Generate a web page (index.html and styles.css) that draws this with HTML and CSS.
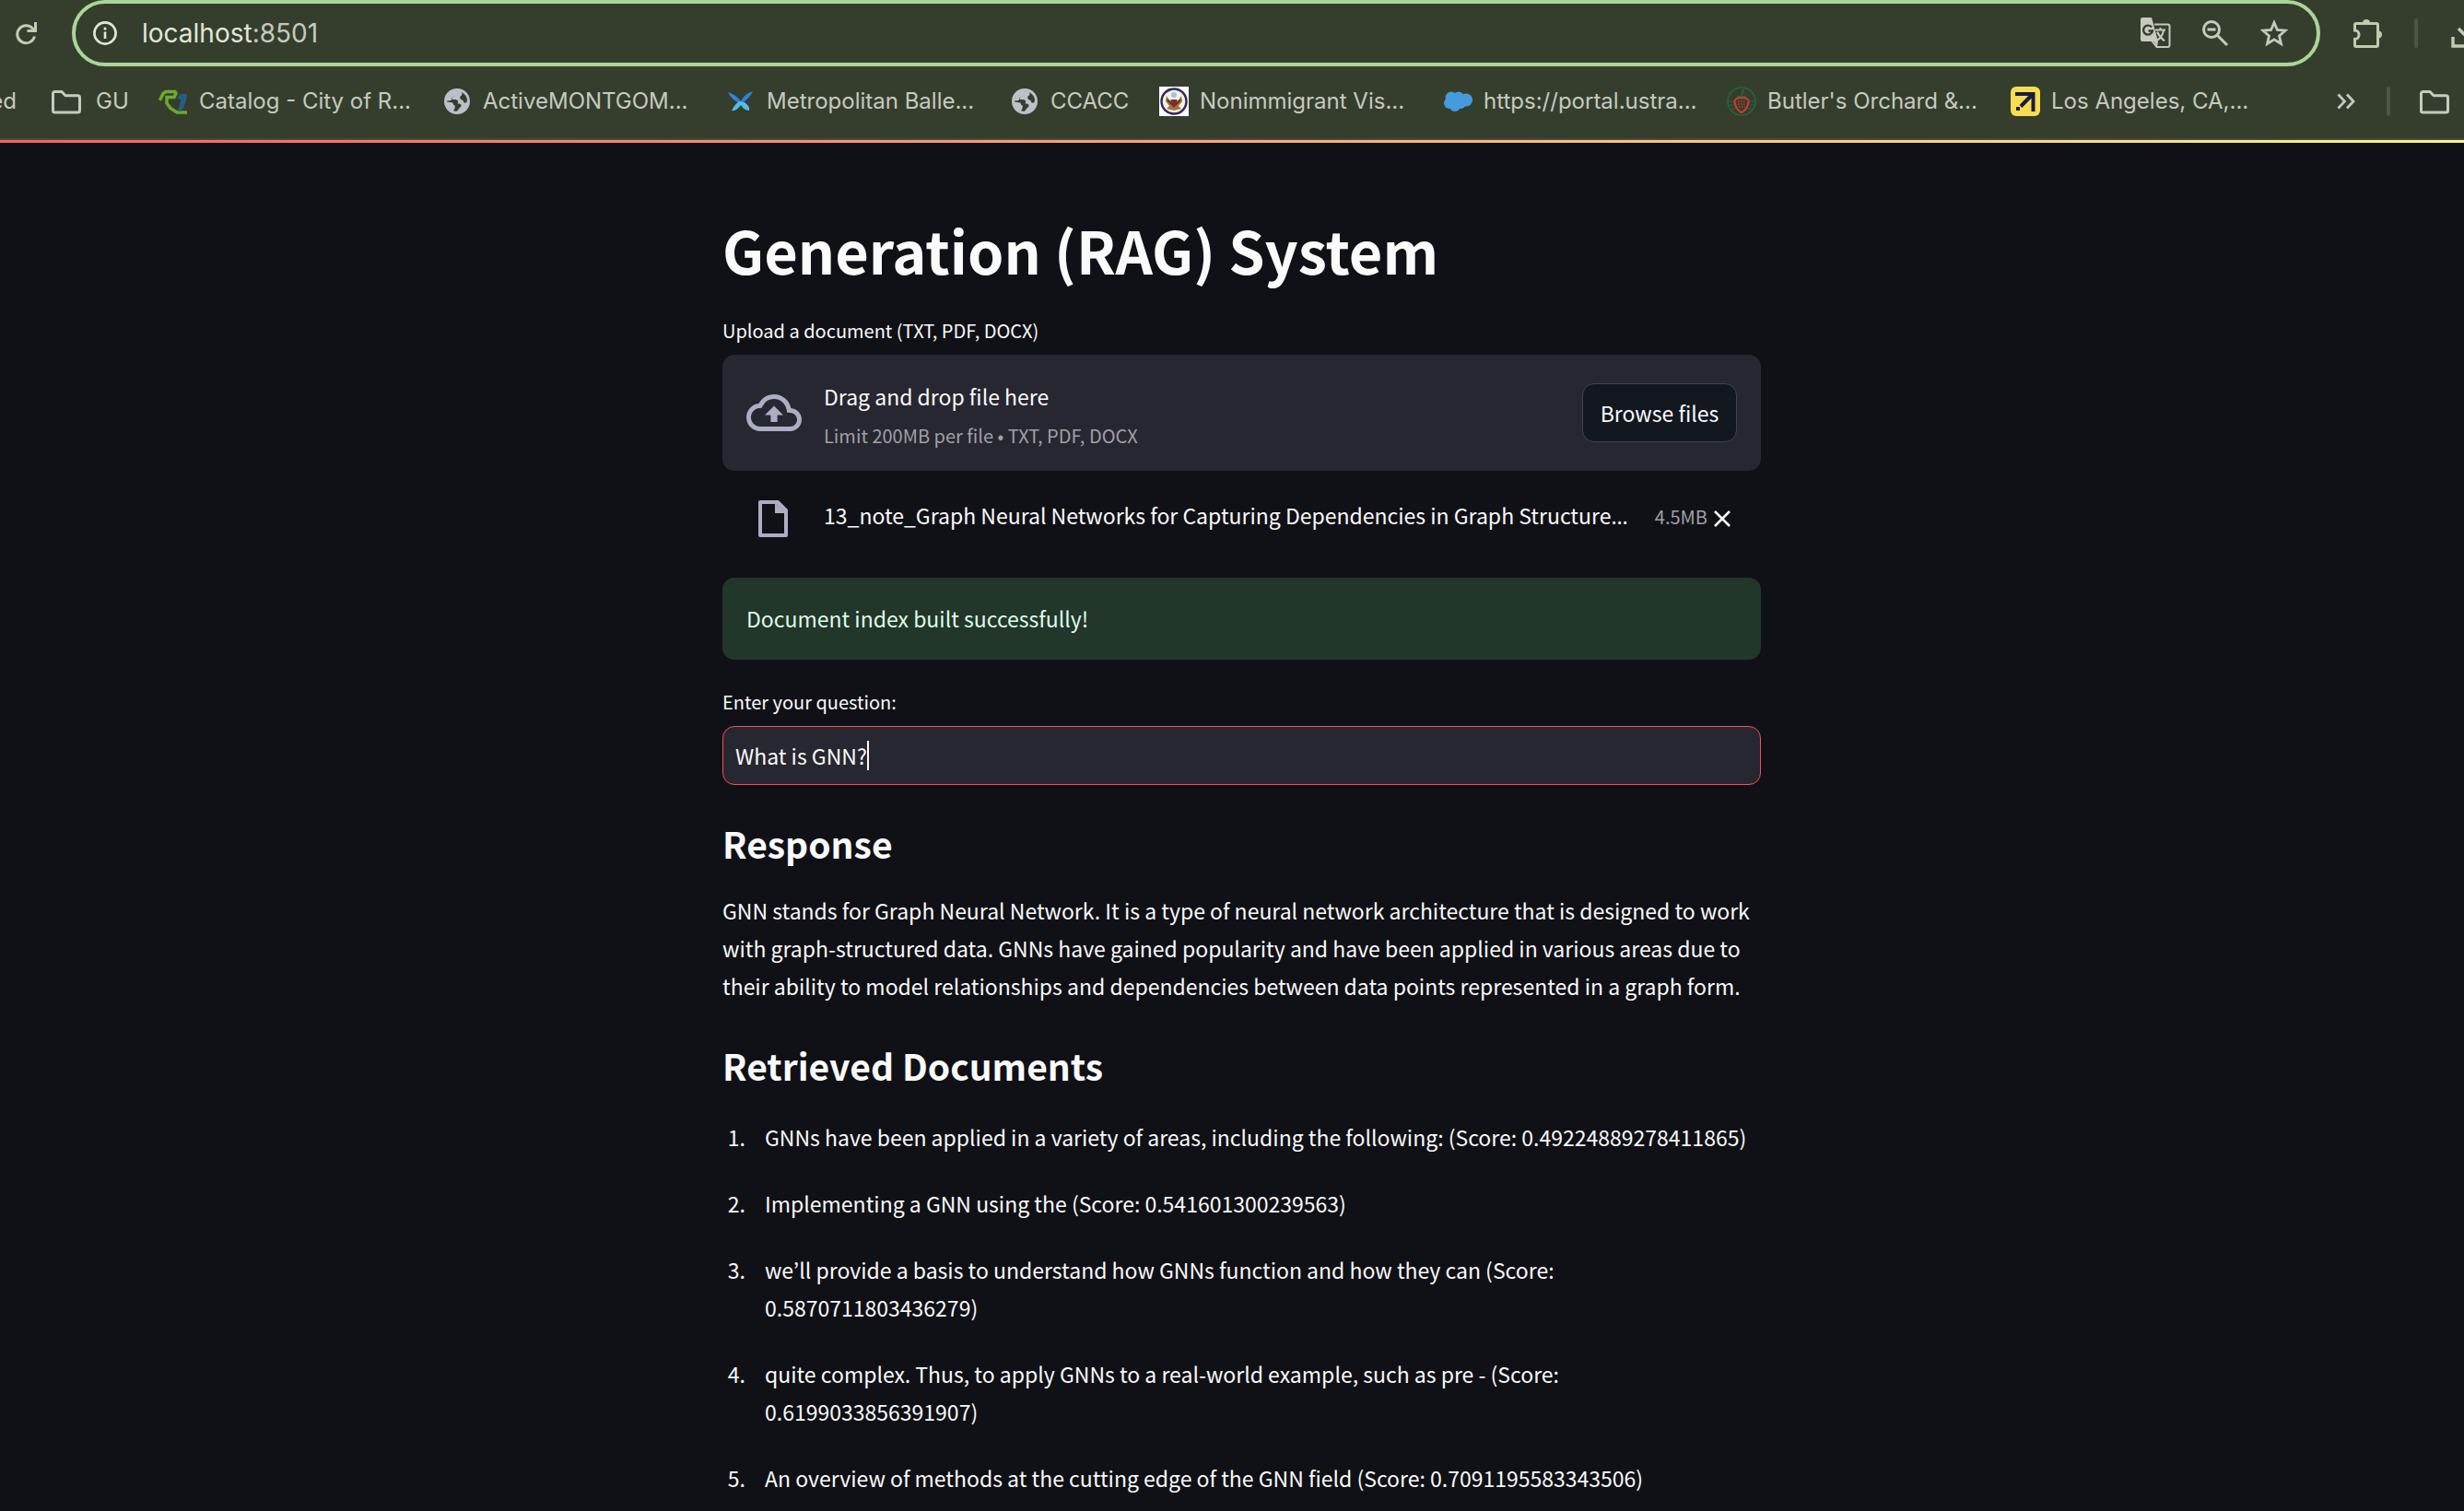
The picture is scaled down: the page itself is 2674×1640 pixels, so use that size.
FILE: index.html
```html
<!DOCTYPE html>
<html lang="en">
<head>
<meta charset="utf-8">
<title>Generation (RAG) System</title>
<link rel="stylesheet" href="styles.css">
</head>
<body>
<header class="browser">
  <div class="toolbar">
    <button class="icon-button reload" aria-label="Reload"><svg width="24" height="26" viewBox="0 0 24 26" fill="none" stroke="#bfccb0" stroke-width="3"><path d="M21.500 16.500A9.500 9.500 0 1 1 19 7.500L21 9.500"/><path d="M22.500 1V10.500H13.500"/></svg></button>
    <form class="omnibox">
      <svg class="info" width="26" height="26" viewBox="0 0 26 26" fill="none" stroke="#e2e6da" stroke-width="2.600"><circle cx="13" cy="13" r="11.600"/><path d="M13 11.500v7.500M13 6.800v2.600"/></svg>
      <div class="address"><span class="host">localhost</span>:8501</div>
      <button type="button" class="icon-button" aria-label="Translate"><svg width="34" height="34" viewBox="0 0 34 34"><path d="M16 7.500H30.500a2 2 0 0 1 2 2V30a2 2 0 0 1-2 2H18.500L13 25" fill="none" stroke="#c5cabf" stroke-width="2"/><path d="M3 0H13L20 26L19 32L15.500 26H3a2 2 0 0 1-2-2V2a2 2 0 0 1 2-2Z" fill="#c5cabf"/><path d="M13 10.500A5 5 0 1 0 14 14.500H9.500" fill="none" stroke="#353e2d" stroke-width="2.400"/><path d="M17 13.500H28M22.500 11v2.500M26 14C25 19 22 23 18.500 25M19 15.500C20.500 19 24 23 27 25.500" fill="none" stroke="#c5cabf" stroke-width="2"/></svg></button>
      <button type="button" class="icon-button" aria-label="Zoom"><svg width="30" height="30" viewBox="0 0 30 30" fill="none" stroke="#c5cabf" stroke-width="3"><circle cx="11" cy="11" r="8.500"/><path d="M17.500 17.500L28 28M6.500 11H15.500"/></svg></button>
      <button type="button" class="icon-button" aria-label="Bookmark"><svg width="32" height="32" viewBox="0 0 32 32" fill="none" stroke="#c5cabf" stroke-width="2.800"><path d="M16 4.500L19.400 12.500L28 13.200L21.500 18.900L23.500 27.500L16 22.900L8.500 27.500L10.500 18.900L4 13.200L12.600 12.500Z"/></svg></button>
    </form>
    <button class="icon-button puzzle" aria-label="Extensions"><svg width="34" height="34" viewBox="0 0 34 34"><path d="M5 6.500H27a1.500 1.500 0 0 1 1.500 1.500V30a1.500 1.500 0 0 1-1.500 1.500H5A1.500 1.500 0 0 1 3.500 30V23.500C6 23.500 8 21.500 8 18.700S6 14 3.500 14V8A1.500 1.500 0 0 1 5 6.500Z" fill="none" stroke="#bfccb0" stroke-width="3"/><path d="M12 6a4 4 0 0 1 8 0ZM29 14.500a4 4 0 0 1 0 8Z" fill="#bfccb0"/></svg></button>
    <span class="divider"></span>
    <button class="icon-button download" aria-label="Downloads"><svg width="32" height="32" viewBox="0 0 32 32" fill="none" stroke="#bfccb0" stroke-width="3.400"><path d="M2 20V30H30V20M16 2V22M8 11L16 19L24 11"/></svg></button>
  </div>
  <nav class="bookmarks">
    <a class="clipped" href="#">ed</a>
    <a class="bookmark folder" href="#"><svg width="32" height="32" viewBox="0 0 32 32" fill="none" stroke="#c5cabf" stroke-width="3" stroke-linejoin="round"><path d="M1.500 7.500a2 2 0 0 1 2-2H11L15 9.800H28.500a2 2 0 0 1 2 2V26a2 2 0 0 1-2 2H3.500a2 2 0 0 1-2-2Z"/></svg>GU</a>
    <a class="bookmark wide" href="#"><svg width="32" height="32" viewBox="0 0 32 32" fill="none"><path d="M1.500 15L5 7.500L8 5.500H18L19 7.500L17 11.500H9V18L13 23.500L20 28H31" stroke="#6fa92f" stroke-width="3.500"/><path d="M20 13L24 8L31 8L30 15L27 23L24 27L21 26L23 20L24 14Z" fill="#245d86"/></svg>Catalog - City of R...</a>
    <a class="bookmark wide" href="#"><svg width="32" height="32" viewBox="0 0 32 32"><circle cx="16" cy="16" r="14" fill="#bcc0c8"/><path d="M17.500 5C13 6 17 8 15 9.500C12 11 10 12 10.500 14H14C17 14.500 18 16 16.500 18.500C20 18 21.500 20 20 22C18 23 18 25 16 26.500C14.500 27 13 26.500 12 26C14 24 14 22 13.500 20.500C12 20 11.500 18.500 11.500 17.500L5 16.500C5 10 10 5 17.500 5Z" fill="#353e2d"/><path d="M16.500 4.500V9L10.500 12L9.500 15L5 15.500C4 9 10 4 16.500 4.500Z" fill="#bcc0c8"/><path d="M21 6C26 9 28 13 26.500 17C24.500 18.500 23 17.500 22.500 15C20 14.500 18.500 12.500 19.500 10.500C21.500 10 22 8 21 6Z" fill="#353e2d"/></svg>ActiveMONTGOM...</a>
    <a class="bookmark wide" href="#"><svg width="32" height="32" viewBox="0 0 32 32"><path d="M2 6C9 8 14 13 16 16C18 12 22 7 29 5C26 11 22 15 18 17L14 18C8 15 4 11 2 6Z" fill="#347fe2"/><path d="M14 16L20 17C24 20 26 23 25 26C21 26 18 23 16 20C14 23 10 27 6 26C8 22 10 19 14 16Z" fill="#56bde8"/></svg>Metropolitan Balle...</a>
    <a class="bookmark short" href="#"><svg width="32" height="32" viewBox="0 0 32 32"><circle cx="16" cy="16" r="14" fill="#bcc0c8"/><path d="M17.500 5C13 6 17 8 15 9.500C12 11 10 12 10.500 14H14C17 14.500 18 16 16.500 18.500C20 18 21.500 20 20 22C18 23 18 25 16 26.500C14.500 27 13 26.500 12 26C14 24 14 22 13.500 20.500C12 20 11.500 18.500 11.500 17.500L5 16.500C5 10 10 5 17.500 5Z" fill="#353e2d"/><path d="M16.500 4.500V9L10.500 12L9.500 15L5 15.500C4 9 10 4 16.500 4.500Z" fill="#bcc0c8"/><path d="M21 6C26 9 28 13 26.500 17C24.500 18.500 23 17.500 22.500 15C20 14.500 18.500 12.500 19.500 10.500C21.500 10 22 8 21 6Z" fill="#353e2d"/></svg>CCACC</a>
    <a class="bookmark wide" href="#"><svg width="32" height="32" viewBox="0 0 32 32"><path d="M0 0H32V32H0Z" fill="#fff"/><circle cx="16" cy="16" r="13.500" fill="#f4f1e6" stroke="#33295f" stroke-width="2.500"/><path d="M8 10L11 15L14 14H18L21 15L24 10L25 16L21 21L24 24L16 26L8 24L11 21L7 16Z" fill="#9a7a3d"/><path d="M9 14L13 19M23 14L19 19" stroke="#4c3524" stroke-width="2"/><path d="M13 14H19V20L16 23L13 20Z" fill="#8c2436"/><circle cx="16" cy="9" r="3" fill="#9cc4e4"/></svg>Nonimmigrant Vis...</a>
    <a class="bookmark wide" href="#"><svg width="32" height="32" viewBox="0 0 32 32" fill="#459bdc"><circle cx="9" cy="12" r="6.500"/><circle cx="17" cy="11" r="5.500"/><circle cx="25" cy="14.500" r="7"/><circle cx="7" cy="18" r="6"/><circle cx="13" cy="21" r="6"/><circle cx="19" cy="18" r="6"/></svg>https://portal.ustra...</a>
    <a class="bookmark wide" href="#"><svg width="32" height="32" viewBox="0 0 32 32" fill="none"><circle cx="16" cy="16" r="15" stroke="#27643a" stroke-width="1.500"/><path d="M2 16H8M24 16H30M3 20H9M23 20H29M5 24H11M21 24H27" stroke="#27643a"/><path d="M16 10L18 3M11 11H21" stroke="#27643a" stroke-width="2"/><path d="M16 12.500C21 11.500 25 14 23 19C22 24 18 27.500 16 28C14 27.500 10 24 9 19C7 14 11 11.500 16 12.500Z" stroke="#cf3a34" stroke-width="2"/><path d="M12 16H21M12 19H21M13 22H20" stroke="#cf3a34" stroke-width="1.500" stroke-dasharray="1.500 1.500"/></svg>Butler's Orchard &amp;...</a>
    <a class="bookmark wide" href="#"><svg width="32" height="32" viewBox="0 0 32 32"><rect width="32" height="32" rx="6" fill="#f7dc54"/><path d="M5 8H24.500V27M24 8L11 21.500" fill="none" stroke="#191e3b" stroke-width="4"/><path d="M6 22H10V26H6Z" fill="#191e3b"/></svg>Los Angeles, CA,...</a>
    <button class="icon-button more" aria-label="More bookmarks"><svg width="20" height="18" viewBox="0 0 20 18" fill="none" stroke="#c5cabf" stroke-width="2.800"><path d="M1.500 1.500L8.500 9L1.500 16.500M11 1.500L18 9L11 16.500"/></svg></button>
    <span class="divider"></span>
    <a class="bookmark all" href="#" aria-label="All bookmarks"><svg width="32" height="32" viewBox="0 0 32 32" fill="none" stroke="#c5cabf" stroke-width="3" stroke-linejoin="round"><path d="M1.500 7.500a2 2 0 0 1 2-2H11L15 9.800H28.500a2 2 0 0 1 2 2V26a2 2 0 0 1-2 2H3.500a2 2 0 0 1-2-2Z"/></svg></a>
  </nav>
</header>
<div class="decoration"></div>
<main class="app">
  <div class="column">
    <h1>Generation (RAG) System</h1>
    <label class="label" for="browse">Upload a document (TXT, PDF, DOCX)</label>
    <section class="dropzone">
      <svg class="cloud" width="60" height="60" viewBox="0 0 24 24" fill="#acafc3"><path d="M19.350 10.040A7.490 7.490 0 0 0 12 4C9.110 4 6.600 5.640 5.350 8.040A5.994 5.994 0 0 0 0 14c0 3.310 2.690 6 6 6h13c2.760 0 5-2.240 5-5 0-2.640-2.050-4.780-4.650-4.960zM19 18H6c-2.210 0-4-1.790-4-4 0-2.050 1.530-3.760 3.560-3.970l1.070-.110.500-.950A5.469 5.469 0 0 1 12 6c2.620 0 4.880 1.860 5.390 4.430l.300 1.500 1.530.110A2.980 2.980 0 0 1 22 15c0 1.650-1.350 3-3 3zM8 13h2.550v3h2.900v-3H16l-4-4z"/></svg>
      <div class="instructions">
        <span>Drag and drop file here</span>
        <small>Limit 200MB per file • TXT, PDF, DOCX</small>
      </div>
      <button class="browse" id="browse">Browse files</button>
    </section>
    <div class="file">
      <svg class="doc" width="48" height="48" viewBox="0 0 24 24" fill="none" stroke="#acafc3" stroke-width="2"><path d="M5 3H14.500L19 7.500V21H5Z" stroke-linejoin="round"/><path d="M13 3L19.500 9H13Z" fill="#acafc3" stroke="none"/></svg>
      <div class="file-info">
        <span class="file-name">13_note_Graph Neural Networks for Capturing Dependencies in Graph Structure<span class="dots">…</span></span>
        <small>4.5MB</small>
      </div>
      <button class="icon-button remove" aria-label="Remove file"><svg width="18" height="18" viewBox="0 0 18 18" stroke="#fafafa" stroke-width="2.500"><path d="M1 1L17 17M17 1L1 17"/></svg></button>
    </div>
    <div class="success" role="status">Document index built successfully!</div>
    <label class="label" for="question">Enter your question:</label>
    <div class="field"><input id="question" type="text" value="What is GNN?"><span class="caret"></span></div>
    <h2>Response</h2>
    <p>GNN stands for Graph Neural Network. It is a type of neural network architecture that is designed to work with graph-structured data. GNNs have gained popularity and have been applied in various areas due to their ability to model relationships and dependencies between data points represented in a graph form.</p>
    <h2>Retrieved Documents</h2>
    <ol>
      <li>GNNs have been applied in a variety of areas, including the following: (Score: 0.49224889278411865)</li>
      <li>Implementing a GNN using the (Score: 0.541601300239563)</li>
      <li>we’ll provide a basis to understand how GNNs function and how they can (Score: 0.5870711803436279)</li>
      <li>quite complex. Thus, to apply GNNs to a real-world example, such as pre - (Score: 0.6199033856391907)</li>
      <li>An overview of methods at the cutting edge of the GNN field (Score: 0.7091195583343506)</li>
    </ol>
  </div>
</main>
</body>
</html>
```
FILE: styles.css
```css
* { box-sizing: border-box; }
body {
  margin: 0;
  min-height: 100vh;
  background: #101116;
  color: #fafafa;
  font: 23px/41px "Noto Sans CJK KR", "Noto Sans", sans-serif;
  overflow-x: hidden;
}
button { font: inherit; color: inherit; }
svg { display: block; flex: none; }
.icon-button { flex: none; padding: 0; border: 0; background: none; }

.browser {
  background: #353e2d;
  border-bottom: 2px solid #454a42;
  color: #c5cabf;
  font-family: Inter, "Liberation Sans", sans-serif;
  overflow: hidden;
}
.toolbar { display: flex; align-items: center; height: 72px; padding-left: 16px; }
.omnibox {
  flex: 1;
  display: flex;
  align-items: center;
  gap: 33px;
  height: 72px;
  margin-left: 38px;
  padding: 0 30px 0 19px;
  border: 4px solid #abd598;
  border-radius: 36px;
}
.address { flex: 1; margin-left: -6px; font-size: 28px; line-height: 36px; }
.host { color: #e2e6da; }
.puzzle { margin-left: 34px; }
.divider { flex: none; width: 4px; height: 32px; border-radius: 2px; background: #4b5544; }
.toolbar .divider { margin: 0 36px 0 34px; }
.download { margin-right: -18px; }

.bookmarks { display: flex; align-items: center; height: 78px; padding-bottom: 2px; font-size: 24px; line-height: 32px; }
.bookmarks a { color: inherit; text-decoration: none; white-space: nowrap; }
.clipped { flex: none; width: 18px; margin-right: 38px; direction: rtl; }
.bookmark { flex: none; display: flex; align-items: center; gap: 12px; margin-right: 36px; }
.folder { width: 80px; gap: 16px; }
.wide { width: 272px; }
.short { width: 126px; }
.more { margin-left: auto; }
.bookmarks .divider { margin: 0 32px 0 34px; }
.all { margin-right: 16px; }

.decoration { height: 3px; background: linear-gradient(90deg, #ff6058, #fff389); }

.app { padding: 74px 0 0 21px; }
.column { width: 100%; max-width: 1127px; margin: 0 auto; }
h1 { margin: 0 0 28px; font-size: 63px; line-height: 84px; font-weight: 700; }
h2 { margin: 0; font-size: 39px; line-height: 54px; font-weight: 700; }
p { margin: 0; }
small { font-size: 20px; line-height: 36px; color: #a0a0a4; }
.label { display: block; font-size: 20px; line-height: 36px; margin-bottom: 8px; }

.dropzone {
  display: flex;
  align-items: center;
  min-height: 126px;
  padding: 0 26px;
  border-radius: 13px;
  background: #262730;
}
.instructions { flex: 1; display: flex; flex-direction: column; gap: 4px; margin-left: 24px; padding-top: 4px; }
.browse {
  width: 168px;
  height: 64px;
  padding: 0;
  border: 1px solid #41444c;
  border-radius: 13px;
  background: #131720;
}

.file { display: flex; align-items: center; height: 64px; margin: 20px 0 32px; padding: 0 33px 0 31px; }
.file-info { flex: 1; display: flex; align-items: baseline; margin-left: 31px; padding-bottom: 6px; }
.file-name { flex: 1; white-space: nowrap; }
.dots { font-family: "Noto Sans", sans-serif; }
.remove { margin-left: 7px; }

.success {
  margin-bottom: 28px;
  padding: 24px 26px;
  border-radius: 13px;
  background: #22362a;
  color: #dffde9;
}

.field {
  display: flex;
  align-items: center;
  height: 64px;
  margin-bottom: 36px;
  padding: 0 13px;
  border: 1px solid #ff4b4b;
  border-radius: 13px;
  background: #262730;
}
.field input {
  field-sizing: content;
  padding: 0;
  border: 0;
  outline: 0;
  background: none;
  color: inherit;
  font: inherit;
}
.caret { width: 2px; height: 32px; background: #fafafa; }

h2 + p { margin: 26px 0 38px; }
ol { margin: 31px 0 0; padding-left: 30px; }
li { margin-bottom: 31px; padding-left: 16px; }
li:last-child { margin-bottom: 0; }
```
